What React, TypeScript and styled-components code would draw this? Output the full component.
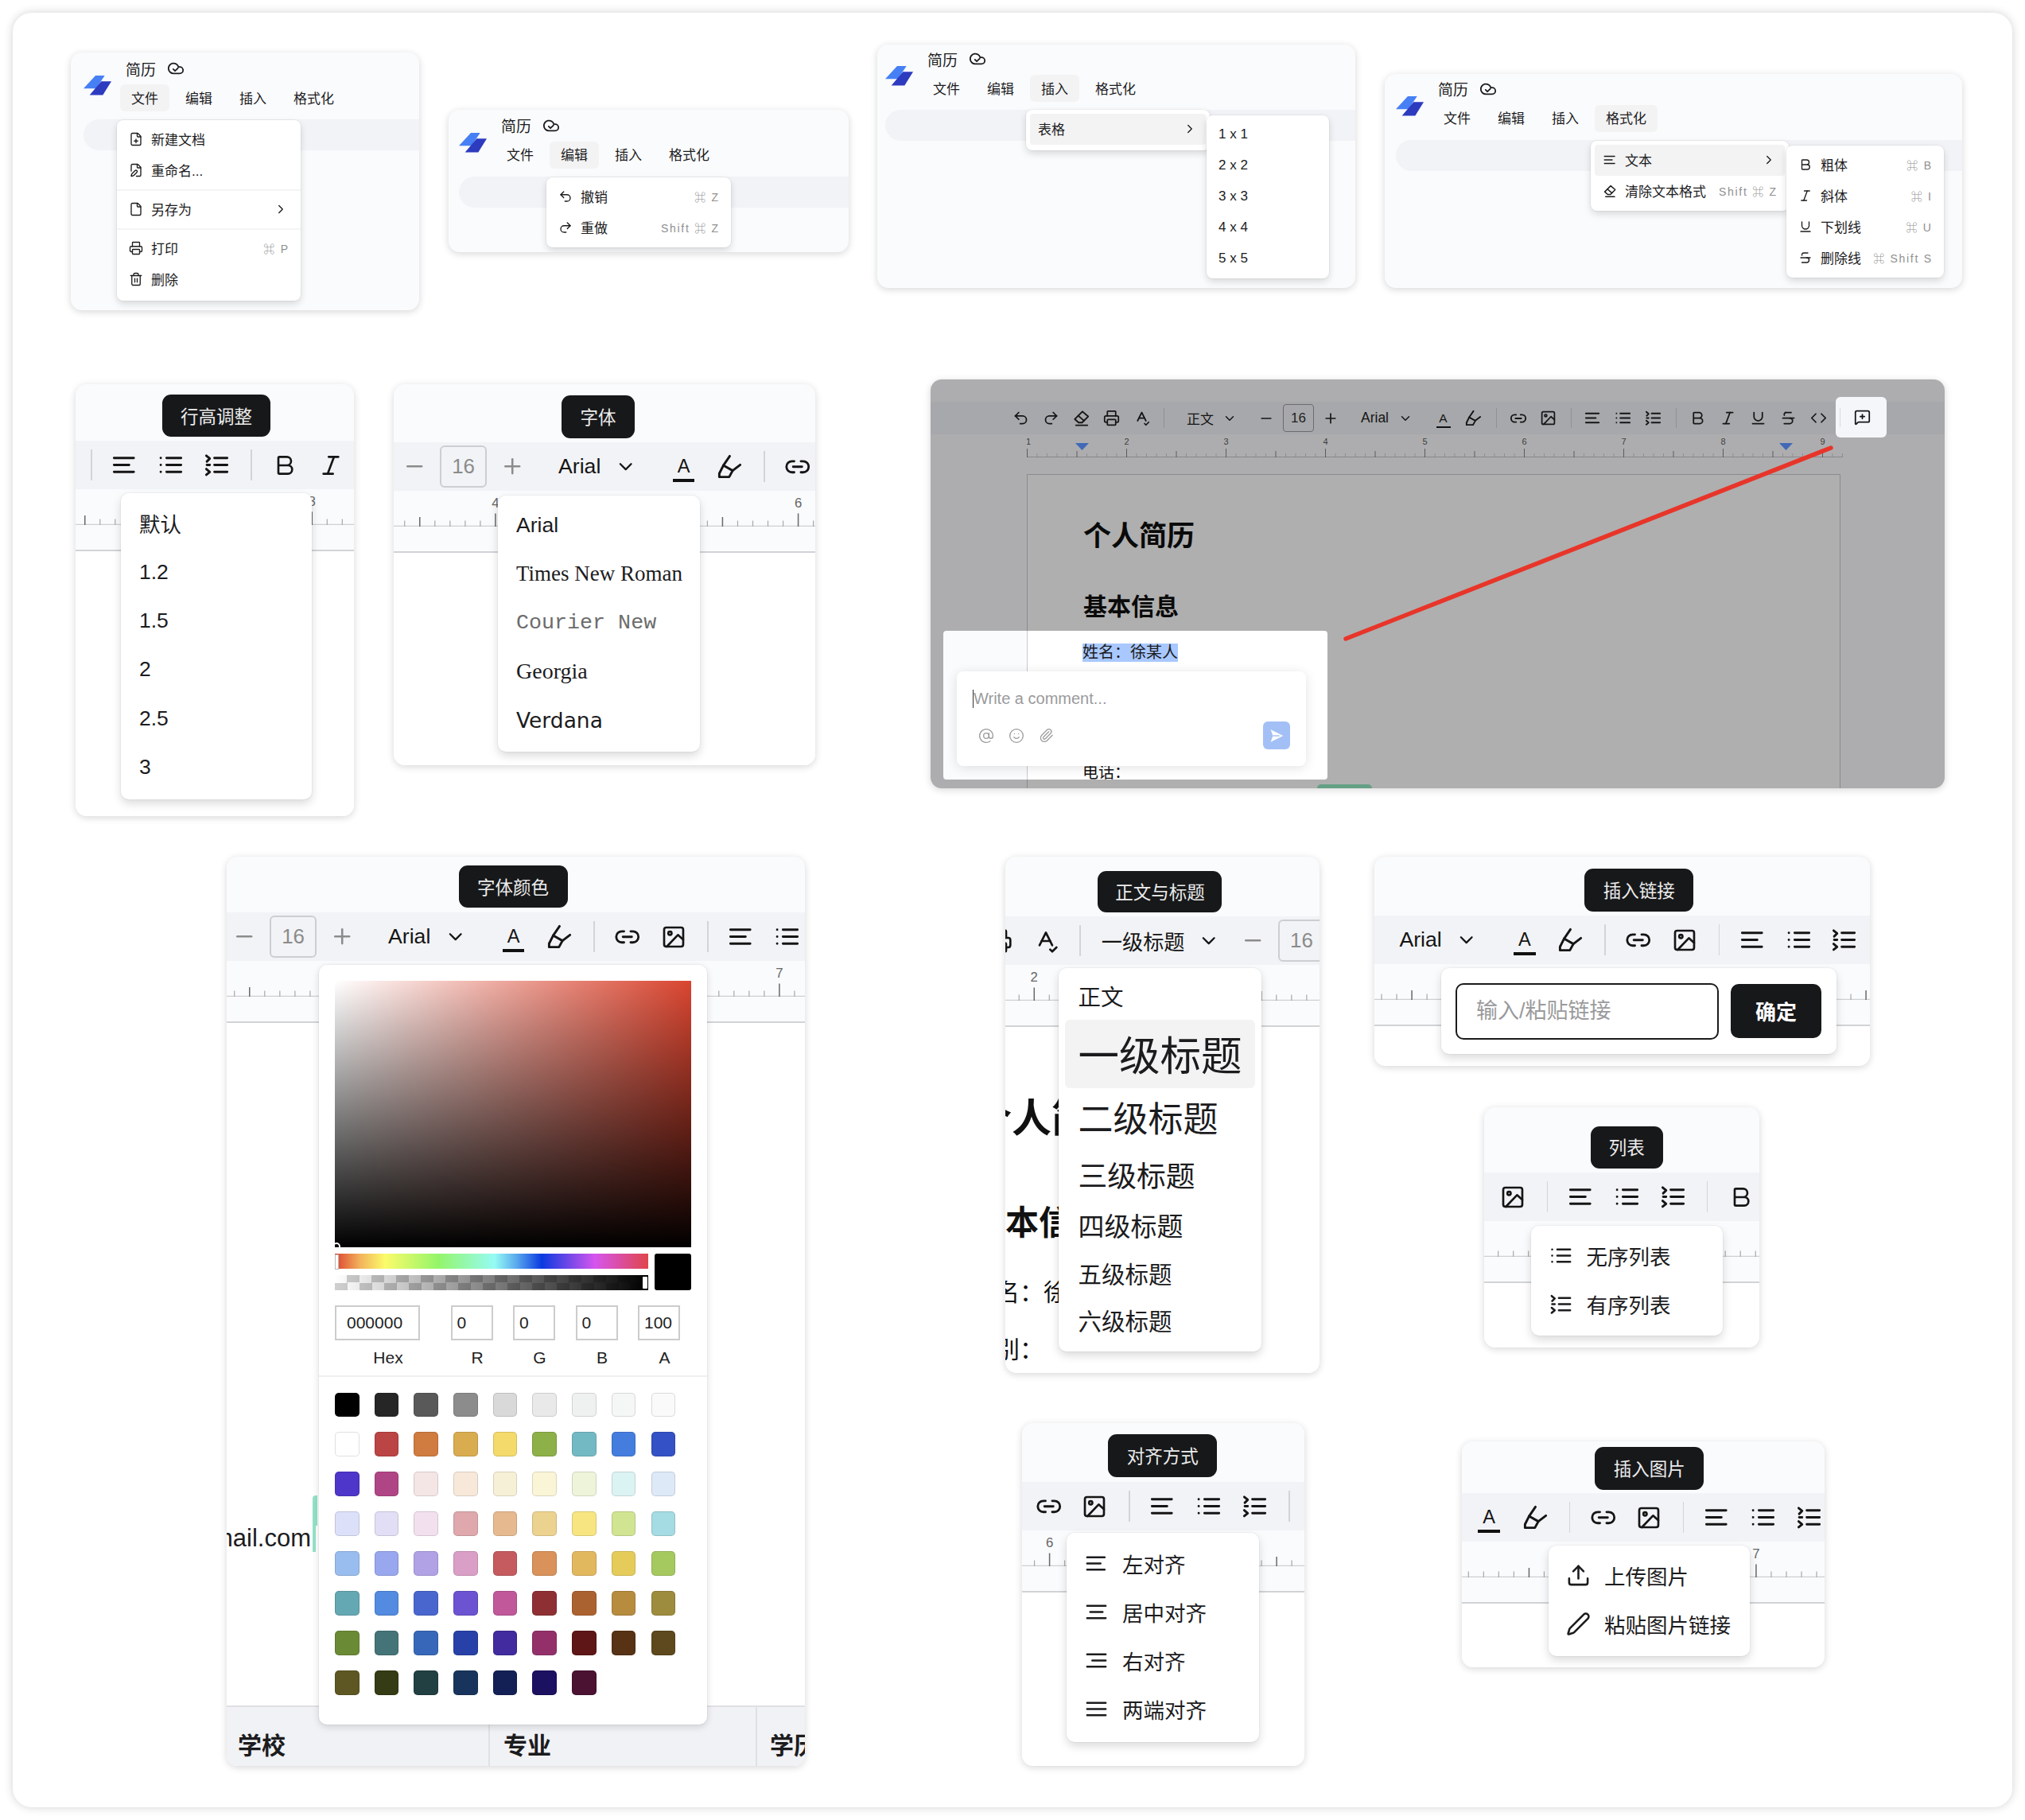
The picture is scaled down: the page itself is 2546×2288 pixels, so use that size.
import React from 'react';
import styled, { createGlobalStyle } from 'styled-components';
import {
    AtSign, Bold, ChevronDown, ChevronRight, Code, File, FilePen, FilePlus, Italic, Link2,
    MessageSquarePlus, Minus, Paperclip, Pen, Plus, Printer, Redo2, Smile, SpellCheck,
    Strikethrough, Trash2, Underline, Undo2, Upload,
} from 'lucide-react';

const SANS = `"Liberation Sans", "Noto Sans CJK SC", sans-serif`;
const K = 1.523;
const COLON = '\uFF1A';

const GlobalStyle = createGlobalStyle`
    html, body {
        margin: 0;
        background: #fff;
        font-family: ${SANS};
        color: #1c1c1e;
    }
`;

const Page = styled.div`
    width: 2546px;
    height: 2288px;
    padding: 16px;
    box-sizing: border-box;
`;

const Sheet = styled.div`
    position: relative;
    width: 2514px;
    height: 2256px;
    background: #fff;
    border-radius: 24px;
    box-shadow: 0 0 12px rgba(0, 0, 0, .18);
`;

const Card = styled.section<{ $x: number; $y: number; $w: number; $h: number }>`
    position: absolute;
    left: ${p => p.$x - 16}px;
    top: ${p => p.$y - 16}px;
    width: ${p => p.$w}px;
    height: ${p => p.$h}px;
    display: flex;
    flex-direction: column;
    overflow: hidden;
    background: #fafbfd;
    border-radius: 14px;
    box-shadow: 0 2px 10px rgba(0, 0, 0, .16);
`;

const Tip = styled.div<{ $l: number; $t: number; $w: number; $h: number }>`
    position: absolute;
    z-index: 3;
    left: ${p => p.$l}px;
    top: ${p => p.$t - 1}px;
    width: ${p => p.$w}px;
    height: ${p => p.$h}px;
    box-sizing: border-box;
    padding-bottom: 2px;
    display: flex;
    align-items: center;
    justify-content: center;
    background: #17181a;
    border-radius: 11px;
    color: #ececec;
    font-size: 22.5px;
`;

const Head = styled.div<{ $h: number }>`
    flex: none;
    height: ${p => p.$h}px;
`;

/* ---- icons that no package has in this shape ---- */

const Glyph = ({ size = 23, children }: { size?: number; children: React.ReactNode }) => (
    <svg viewBox="0 0 24 24" width={size} height={size} fill="none" stroke="currentColor"
         strokeWidth={2} strokeLinecap="round" strokeLinejoin="round">{children}</svg>
);

type IconProps = { size?: number };

const EraserIcon = ({ size }: IconProps) => (
    <Glyph size={size}><path d="M13.5 3.5 21 10l-8 8H8.5L3.5 13.5z" /><path d="m8 9 7.5 6.5" /><path d="M5 21.5h15" /></Glyph>
);
const MarkerIcon = ({ size }: IconProps) => (
    <Glyph size={size}><path d="M12 3 6.5 11" /><path d="m6.5 11 8 4.5-3 5.5H3v-3z" /><path d="m14.5 15.5 6.5-5" /></Glyph>
);
const PictureIcon = ({ size }: IconProps) => (
    <Glyph size={size}><rect x="3" y="3" width="18" height="18" rx="2" /><circle cx="8.5" cy="8.5" r="1.6" /><path d="M21 14.5 16 10 5.5 21" /></Glyph>
);
const AlignLeftIcon = ({ size }: IconProps) => (
    <Glyph size={size}><path d="M3 6h17M3 12h13M3 18h17" /></Glyph>
);
const AlignCenterIcon = ({ size }: IconProps) => (
    <Glyph size={size}><path d="M3 6h18M6 12h12M3 18h18" /></Glyph>
);
const AlignRightIcon = ({ size }: IconProps) => (
    <Glyph size={size}><path d="M3 6h18M8 12h13M3 18h18" /></Glyph>
);
const AlignFullIcon = ({ size }: IconProps) => (
    <Glyph size={size}><path d="M3 6h18M3 12h18M3 18h18" /></Glyph>
);
const BulletsIcon = ({ size }: IconProps) => (
    <Glyph size={size}><path d="M8.5 6H21M8.5 12H21M8.5 18H21M3.5 6h.01M3.5 12h.01M3.5 18h.01" /></Glyph>
);
const NumbersIcon = ({ size }: IconProps) => (
    <Glyph size={size}><path d="M10 6h11M10 12h11M10 18h11" /><path d="m3 4 3 2.5L3.5 9M3.5 12H6M3 15.5l3 2.5-3 2.5" /></Glyph>
);
const CloudCheckIcon = ({ size }: IconProps) => (
    <Glyph size={size}><path d="M17.5 19H9a7 7 0 1 1 6.7-9h1.8a4.5 4.5 0 1 1 0 9Z" /><path d="m8.5 13 2.5 2.5 4-4" /></Glyph>
);

const Logo = () => (
    <svg viewBox="0 0 35 25" width={35} height={25}>
        <path d="M15 0h11.7L15.7 16.3H0z" fill="#4680f4" />
        <path d="M22.3 7.3H35L24.3 24.6H7.7z" fill="#2d3bbf" />
    </svg>
);

/* ---- document menu cards ---- */

const MenuHeader = styled.div<{ $pad: number; $top: number }>`
    flex: none;
    display: flex;
    align-items: center;
    gap: 18px;
    padding: ${p => p.$top}px 0 0 ${p => p.$pad}px;
`;

const TitleStack = styled.div`
    display: flex;
    flex-direction: column;
    gap: 7px;
`;

const TitleRow = styled.div`
    display: flex;
    align-items: center;
    gap: 14px;
    height: 24px;
    box-sizing: border-box;
    padding-bottom: 2px;
    font-size: 19px;
`;

const Tabs = styled.div`
    display: flex;
    gap: 6px;
    margin-left: -7px;
`;

const Tab = styled.div<{ $on?: boolean }>`
    height: 34px;
    box-sizing: border-box;
    padding: 0 14px 2px;
    display: flex;
    align-items: center;
    font-size: 17px;
    border-radius: 6px;
    background: ${p => (p.$on ? '#f3f3f4' : 'transparent')};
`;

const Strip = styled.div<{ $pad: number; $gap: number }>`
    flex: none;
    height: 39px;
    margin: ${p => p.$gap}px 0 0 ${p => p.$pad}px;
    background: #f2f3f6;
    border-radius: 20px 0 0 20px;
`;

const TAB_NAMES = ['文件', '编辑', '插入', '格式化'];

const DocHeader = ({ pad, top, active, gap }: { pad: number; top: number; active: number; gap: number }) => (
    <>
        <MenuHeader $pad={pad} $top={top}>
            <Logo />
            <TitleStack>
                <TitleRow>简历 <CloudCheckIcon size={22} /></TitleRow>
                <Tabs>
                    {TAB_NAMES.map((name, i) => <Tab key={name} $on={i === active}>{name}</Tab>)}
                </Tabs>
            </TitleStack>
        </MenuHeader>
        <Strip $pad={pad} $gap={gap} />
    </>
);

const Menu = styled.div<{ $l: number; $t: number; $w: number; $h: number; $z?: number }>`
    position: absolute;
    z-index: ${p => p.$z ?? 2};
    left: ${p => p.$l}px;
    top: ${p => p.$t}px;
    width: ${p => p.$w}px;
    height: ${p => p.$h}px;
    box-sizing: border-box;
    padding: 4.5px 0;
    background: #fff;
    border-radius: 8px;
    box-shadow: 0 0 0 1px rgba(0, 0, 0, .035), 0 4px 10px rgba(0, 0, 0, .14);
`;

const MenuRow = styled.div<{ $on?: boolean }>`
    height: 39px;
    margin: 0 5px;
    padding: 0 11px 0 10px;
    display: flex;
    align-items: center;
    gap: 10px;
    font-size: 17px;
    border-radius: 4px;
    background: ${p => (p.$on ? '#f3f3f4' : 'transparent')};
    & > svg { flex: none; }
`;

const RowLabel = styled.span`
    flex: 1;
    margin-bottom: 2px;
    white-space: nowrap;
`;

const SizeLabel = styled.span`
    flex: 1;
    white-space: nowrap;
`;

const Shortcut = styled.span`
    font-size: 14px;
    letter-spacing: 1.7px;
    margin-right: -1.7px;
    color: #8f8f8f;
    white-space: nowrap;
`;

const MenuLine = styled.div`
    height: 2px;
    margin: 4px 0;
    background: #f4f4f5;
`;

/* ---- shared editor toolbar, shown at different crops ---- */

const ToolbarStrip = styled.div<{ $dim?: boolean }>`
    flex: none;
    height: ${p => (p.$dim ? 41 : 61)}px;
    display: flex;
    align-items: center;
    overflow: hidden;
    background: ${p => (p.$dim ? '#a7a8ab' : '#f2f3f6')};
`;

const ToolbarTrack = styled.div<{ $x: number; $dim?: boolean }>`
    flex: none;
    display: flex;
    align-items: center;
    height: 40px;
    zoom: ${p => (p.$dim ? 1 : K)};
    margin-left: ${p => (p.$dim ? p.$x : p.$x / K)}px;
    color: #151515;
`;

const ToolBtn = styled.div`
    flex: none;
    width: 38px;
    display: flex;
    align-items: center;
    justify-content: center;
`;

const StepBtn = styled(ToolBtn)<{ $dim?: boolean }>`
    color: ${p => (p.$dim ? '#151515' : '#8b8b8b')};
`;

const ToolLine = styled.div<{ $dim?: boolean }>`
    flex: none;
    width: 1px;
    height: 25px;
    margin: 0 8px 0 9px;
    background: ${p => (p.$dim ? '#909194' : '#d3d4d7')};
`;

const HeadingPick = styled.div<{ $wide?: boolean }>`
    flex: none;
    display: flex;
    align-items: center;
    gap: 11px;
    margin: 0 ${p => (p.$wide ? 8 : 18)}px 0 ${p => (p.$wide ? 9 : 20)}px;
    font-size: ${p => (p.$wide ? 17.2 : 17)}px;
    white-space: nowrap;
`;

const SizeBox = styled.div<{ $dim?: boolean }>`
    flex: none;
    width: 39px;
    height: 35px;
    margin: 0 2px;
    box-sizing: border-box;
    display: flex;
    align-items: center;
    justify-content: center;
    border: 1.5px solid ${p => (p.$dim ? '#6c6c6e' : '#cdced1')};
    border-radius: 4px;
    font-size: 17px;
    color: ${p => (p.$dim ? '#222' : '#8b8b8b')};
`;

const FontPick = styled.div`
    flex: none;
    display: flex;
    align-items: center;
    gap: 11.5px;
    margin: 0 20px 0 19px;
    font-size: 17.5px;
`;

const ColorBtn = styled.div`
    flex: none;
    width: 38px;
    padding-top: 5px;
    display: flex;
    flex-direction: column;
    align-items: center;
    font-size: 15.5px;
    line-height: 15px;
    &::after {
        content: '';
        width: 18px;
        height: 2.5px;
        margin-top: 3px;
        background: #111;
    }
`;

const EditorToolbar = ({ x, dim, wide }: { x: number; dim?: boolean; wide?: boolean }) => (
    <ToolbarStrip $dim={dim}>
        <ToolbarTrack $x={x} $dim={dim}>
            <ToolBtn><Undo2 size={21} /></ToolBtn>
            <ToolBtn><Redo2 size={21} /></ToolBtn>
            <ToolBtn><EraserIcon /></ToolBtn>
            <ToolBtn><Printer size={21} /></ToolBtn>
            <ToolBtn><SpellCheck size={21} /></ToolBtn>
            <ToolLine $dim={dim} />
            <HeadingPick $wide={wide}>{wide ? '一级标题' : '正文'}<ChevronDown size={18} /></HeadingPick>
            <StepBtn $dim={dim}><Minus size={20} /></StepBtn>
            <SizeBox $dim={dim}>16</SizeBox>
            <StepBtn $dim={dim}><Plus size={20} /></StepBtn>
            <FontPick>Arial<ChevronDown size={18} /></FontPick>
            <ColorBtn>A</ColorBtn>
            <ToolBtn><MarkerIcon /></ToolBtn>
            <ToolLine $dim={dim} />
            <ToolBtn><Link2 size={22} /></ToolBtn>
            <ToolBtn><PictureIcon size={21} /></ToolBtn>
            <ToolLine $dim={dim} />
            <ToolBtn><AlignLeftIcon /></ToolBtn>
            <ToolBtn><BulletsIcon /></ToolBtn>
            <ToolBtn><NumbersIcon /></ToolBtn>
            <ToolLine $dim={dim} />
            <ToolBtn><Bold size={21} /></ToolBtn>
            <ToolBtn><Italic size={21} /></ToolBtn>
            <ToolBtn><Underline size={21} /></ToolBtn>
            <ToolBtn><Strikethrough size={21} /></ToolBtn>
            <ToolBtn><Code size={21} /></ToolBtn>
            <ToolLine $dim={dim} />
            <ToolBtn><MessageSquarePlus size={21} /></ToolBtn>
        </ToolbarTrack>
    </ToolbarStrip>
);

/* ---- ruler ---- */

const RulerBar = styled.div<{ $dim?: boolean }>`
    flex: none;
    height: ${p => (p.$dim ? 29 : 45)}px;
    display: flex;
    align-items: flex-end;
    overflow: hidden;
    background: ${p => (p.$dim ? '#adadaf' : '#fafbfd')};
`;

const RulerTrack = styled.div<{ $x: number; $dim?: boolean }>`
    flex: none;
    width: 1026px;
    height: 29px;
    zoom: ${p => (p.$dim ? 1 : K)};
    margin-left: ${p => (p.$dim ? p.$x : p.$x / K)}px;
    & svg { display: block; }
`;

const RulerFoot = styled.div<{ $dim?: boolean }>`
    flex: none;
    box-sizing: border-box;
    height: ${p => (p.$dim ? 21 : 33)}px;
    background: ${p => (p.$dim ? '#adadaf' : '#fafbfd')};
    border-bottom: ${p => (p.$dim ? 'none' : '2px solid #d2d3d6')};
`;

const RULER_TICKS = Array.from({ length: 83 }, (_, i) => i);

const Ruler = ({ x, dim }: { x: number; dim?: boolean }) => {
    const line = dim ? '#88888a' : '#cfd0d3';
    const tick = dim ? '#5c5c5e' : '#6a6a6a';
    const minor = dim ? '#88888a' : '#a9a9ab';
    return (
        <RulerBar $dim={dim}>
            <RulerTrack $x={x} $dim={dim}>
                <svg width={1026} height={29} viewBox="0 0 1026 29">
                    <line x1={0} y1={28.5} x2={1026} y2={28.5} stroke={line} strokeWidth={1} />
                    {RULER_TICKS.map(i => {
                        const h = i % 10 === 0 ? 11 : i % 5 === 0 ? 8 : 5;
                        const px = i * 12.5 + 0.5;
                        return <line key={i} x1={px} x2={px} y1={29 - h} y2={29} stroke={h === 5 ? minor : tick} strokeWidth={h === 5 ? .8 : 1} />;
                    })}
                    {Array.from({ length: 9 }, (_, i) => (
                        <text key={i} x={i * 125 + (i === 0 ? 2 : 0.5)} y={13} textAnchor="middle"
                              fontSize={11} fontFamily="Liberation Sans" fill={dim ? '#3d3d3d' : '#666'}>{i + 1}</text>
                    ))}
                    <path d="M61 11h17l-8.5 9z" fill="#4169b8" />
                    <path d="M946 11h17l-8.5 9z" fill="#4169b8" />
                </svg>
            </RulerTrack>
        </RulerBar>
    );
};

const DocArea = styled.div`
    flex: 1;
    min-height: 0;
    background: #fff;
`;

/* ---- big dropdowns ---- */

const BigMenu = styled.div<{ $l: number; $t: number; $w: number; $h: number; $pad?: number }>`
    position: absolute;
    z-index: 2;
    left: ${p => p.$l}px;
    top: ${p => p.$t}px;
    width: ${p => p.$w}px;
    height: ${p => p.$h}px;
    box-sizing: border-box;
    padding: ${p => p.$pad ?? 7}px 0;
    background: #fff;
    border-radius: 10px;
    box-shadow: 0 0 0 1px rgba(0, 0, 0, .03), 0 5px 12px rgba(0, 0, 0, .15);
`;

const OptionRow = styled.div<{ $family?: string; $size?: number; $color?: string }>`
    height: 61.4px;
    padding-left: 23px;
    display: flex;
    align-items: center;
    font-family: ${p => p.$family ?? SANS};
    font-size: ${p => p.$size ?? 26.5}px;
    color: ${p => p.$color ?? '#1c1c1e'};
    white-space: nowrap;
`;

const IconRow = styled.div`
    height: 61px;
    box-sizing: border-box;
    padding: 0 0 2px 22px;
    display: flex;
    align-items: center;
    gap: 17px;
    font-size: 26.5px;
    white-space: nowrap;
    & > svg { flex: none; }
`;

const HeadingRow = styled.div<{ $size: number; $h: number; $on?: boolean }>`
    height: ${p => p.$h}px;
    box-sizing: border-box;
    margin: 0 8px;
    padding: 0 0 ${p => p.$size * .05}px 16px;
    display: flex;
    align-items: center;
    font-size: ${p => p.$size}px;
    white-space: nowrap;
    border-radius: 6px;
    background: ${p => (p.$on ? '#f3f3f4' : 'transparent')};
`;

/* ---- colour picker ---- */

const Popover = styled.div`
    position: absolute;
    z-index: 2;
    left: 116px;
    top: 136px;
    width: 488px;
    height: 955px;
    box-sizing: border-box;
    padding: 20px 20px 0;
    background: #fff;
    border-radius: 10px;
    box-shadow: 0 0 0 1px rgba(0, 0, 0, .03), 0 3px 10px rgba(0, 0, 0, .14);
`;

const ShadeBox = styled.div`
    position: relative;
    width: 448px;
    height: 335px;
    background:
        linear-gradient(to top, #000, rgba(0, 0, 0, 0)),
        linear-gradient(to right, #fff, #d94530);
    overflow: hidden;
    &::after {
        content: '';
        position: absolute;
        left: -3px;
        bottom: -4px;
        width: 6px;
        height: 6px;
        border: 2px solid #fff;
        border-radius: 50%;
    }
`;

const BarsRow = styled.div`
    display: flex;
    gap: 8px;
    margin-top: 8px;
`;

const BarsStack = styled.div`
    width: 394px;
    display: flex;
    flex-direction: column;
    gap: 8px;
`;

const HueBar = styled.div`
    position: relative;
    height: 19px;
    background: linear-gradient(to right, #dc4230 0%, #f2b25b 8%, #fbfb6a 16%, #94f56a 33%, #95fbf4 51%, #5aa8ee 58%, #0a3ae0 66%, #d655ee 83%, #e0454a 100%);
    &::after {
        content: '';
        position: absolute;
        left: 0;
        top: 1px;
        width: 3px;
        height: 17px;
        background: #fff;
        border: 1px solid #bbb;
    }
`;

const AlphaBar = styled.div`
    position: relative;
    height: 19px;
    background:
        linear-gradient(to right, rgba(0, 0, 0, 0), #000),
        conic-gradient(#d0d0d0 25%, #fff 0 50%, #d0d0d0 0 75%, #fff 0) 0 0 / 31px 19px;
    &::after {
        content: '';
        position: absolute;
        right: 1px;
        top: 2px;
        width: 6px;
        height: 15px;
        background: #fff;
        border-radius: 1px;
    }
`;

const Preview = styled.div`
    width: 46px;
    height: 46px;
    background: #000;
    border-radius: 3px;
`;

const ChannelGrid = styled.div`
    display: grid;
    grid-template-columns: 120px repeat(4, 53px);
    column-gap: 25.5px;
    margin-top: 19px;
`;

const ChannelInput = styled.input<{ $hex?: boolean }>`
    width: ${p => (p.$hex ? 107 : 53)}px;
    height: 44px;
    box-sizing: border-box;
    padding: 0 0 0 ${p => (p.$hex ? 13 : 6)}px;
    border: 2px solid #cccccc;
    outline: none;
    font: 21px ${SANS};
    color: #222;
`;

const ChannelLabel = styled.div`
    padding: 10px 0 0 14px;
    text-align: center;
    font-size: 21px;
    line-height: 24px;
    color: #222;
`;

const PickerLine = styled.div`
    height: 2px;
    margin: 10px -20px 0;
    background: #f0f0f1;
`;

const SwatchGrid = styled.div`
    display: grid;
    grid-template-columns: repeat(9, 30.5px);
    column-gap: 19.2px;
    row-gap: 19.3px;
    margin-top: 19.5px;
`;

const Swatch = styled.div<{ $c: string }>`
    height: 30.7px;
    box-sizing: border-box;
    background: ${p => p.$c};
    border: 1.5px solid rgba(0, 0, 0, .12);
    border-radius: 5px;
`;

const SWATCHES = [
    '#000000', '#262626', '#595959', '#8c8c8c', '#d9d9d9', '#e9e9e9', '#eff1f0', '#f5f7f6', '#fafafa',
    '#ffffff', '#bb4444', '#d07b3f', '#d9ac50', '#f3da6a', '#8db048', '#73b9c3', '#447ddd', '#3451c5',
    '#4f36ca', '#b04585', '#f5e6e6', '#f7e8da', '#f6f0d6', '#f9f5d6', '#eef4da', '#dcf3f3', '#dee9f7',
    '#dce0f9', '#e2def5', '#f3e0ee', '#dea8ad', '#e6b98f', '#ecd28f', '#f6e581', '#d0e492', '#a5dbe2',
    '#99bdee', '#99a7ee', '#b1a2e6', '#da9fc6', '#c55a5f', '#d9925a', '#e2b85f', '#e5cc5a', '#a5c95f',
    '#64a8b3', '#528bdf', '#4966cf', '#6c53d1', '#c0589a', '#8e3033', '#ab6231', '#b78c3e', '#9e8c3e',
    '#6b8a35', '#447478', '#3767b8', '#2741a8', '#412b9e', '#93306a', '#5e1616', '#573215', '#5e481d',
    '#5e5723', '#353b14', '#223f42', '#18345c', '#132055', '#1c1060', '#4b1232',
];

const EmailDoc = styled(DocArea)`
    display: flex;
    flex-direction: column;
    justify-content: flex-end;
`;

const EmailLine = styled.div`
    position: relative;
    width: 106px;
    height: 34px;
    margin-bottom: 193px;
    display: flex;
    justify-content: flex-end;
    font-size: 31px;
    line-height: 34px;
    white-space: nowrap;
    &::after {
        content: '';
        position: absolute;
        left: 108px;
        top: -37px;
        width: 6px;
        height: 38px;
        background: #94e2c8;
        border-radius: 4px 0 0 0;
    }
    &::before {
        content: '';
        position: absolute;
        left: 108px;
        top: 0;
        width: 4px;
        height: 34px;
        background: #94e2c8;
    }
`;

const SchoolTable = styled.div`
    flex: none;
    height: 76px;
    box-sizing: border-box;
    display: grid;
    grid-template-columns: 331px 336px 1fr;
    background: #f1f2f5;
    border-top: 2px solid #e0e1e3;
`;

const SchoolCell = styled.div<{ $pad: number }>`
    padding: 27px 0 0 ${p => p.$pad}px;
    border-right: 2px solid #e0e1e3;
    font-size: 30px;
    line-height: 44px;
    font-weight: 700;
    white-space: nowrap;
    overflow: hidden;
    &:last-child { border-right: none; }
`;

/* ---- heading crop ---- */

const ResumeCrop = styled(DocArea)`
    margin-left: -42px;
    color: #111;
`;

const CropTitle = styled.div`
    padding-top: 85px;
    font-size: 50px;
    line-height: 60px;
    font-weight: 700;
    white-space: nowrap;
`;

const CropSubtitle = styled.div`
    margin-top: 77px;
    font-size: 42px;
    line-height: 50px;
    font-weight: 700;
    white-space: nowrap;
`;

const CropText = styled.div<{ $gap: number }>`
    margin-top: ${p => p.$gap}px;
    font-size: 30px;
    line-height: 40px;
    white-space: nowrap;
`;

/* ---- link popup ---- */

const LinkPopup = styled(BigMenu)`
    display: flex;
    align-items: center;
    gap: 15px;
    padding: 0 18px;
`;

const LinkInput = styled.input`
    width: 331px;
    height: 71px;
    box-sizing: border-box;
    padding: 0 24px;
    border: 2px solid #1b1b1d;
    border-radius: 10px;
    outline: none;
    font: 27px ${SANS};
    &::placeholder { color: #9a9a9c; opacity: 1; }
`;

const ConfirmBtn = styled.div`
    width: 114px;
    height: 68px;
    box-sizing: border-box;
    padding-bottom: 2px;
    display: flex;
    align-items: center;
    justify-content: center;
    background: #17181a;
    border-radius: 10px;
    color: #fff;
    font-size: 26px;
    font-weight: 700;
`;

/* ---- dimmed comment walkthrough ---- */

const DimCard = styled(Card)`
    background: #adadaf;
`;

const PageSheet = styled.div`
    flex: 1;
    width: 1023px;
    margin-left: 121px;
    padding-left: 70px;
    box-sizing: border-box;
    background: #afafaf;
    border: 1px solid #8b8b8d;
    border-bottom: none;
    color: #0a0a0a;
`;

const PageTitle = styled.div`
    margin-top: 55px;
    font-size: 35px;
    line-height: 44px;
    font-weight: 700;
`;

const PageSubtitle = styled.div`
    margin-top: 47px;
    font-size: 30px;
    line-height: 40px;
    font-weight: 700;
`;

const CommentSpot = styled.div`
    position: absolute;
    z-index: 2;
    left: 1138px;
    top: 22px;
    width: 64px;
    height: 51px;
    display: flex;
    align-items: center;
    background: #f5f6fa;
    border-radius: 6px;
    color: #151515;
    & > svg { margin-left: 17px; }
`;

const SpotLine = styled.div`
    width: 1px;
    height: 24px;
    margin-left: 5px;
    background: #d8d9dc;
`;

const Arrow = styled.svg`
    position: absolute;
    z-index: 1;
    left: 0;
    top: 0;
`;

const SelectSpot = styled.div`
    position: absolute;
    z-index: 2;
    left: 16px;
    top: 316px;
    width: 483px;
    height: 187px;
    box-sizing: border-box;
    padding: 16px 0 0 17px;
    overflow: hidden;
    background: linear-gradient(to right, #fafbfd 105px, #c9c9cb 105px, #c9c9cb 106px, #fff 106px);
    border-radius: 4px;
`;

const SelectedText = styled.div`
    width: fit-content;
    margin-left: 158px;
    font-size: 20px;
    line-height: 23px;
    background: #a9c8ff;
    white-space: nowrap;
`;

const CommentBox = styled.div`
    position: relative;
    z-index: 1;
    width: 439px;
    height: 119px;
    margin-top: 12px;
    box-sizing: border-box;
    padding-top: 22px;
    background: #fff;
    border-radius: 8px;
    box-shadow: 0 2px 14px rgba(0, 0, 0, .12);
`;

const CommentHint = styled.div`
    display: flex;
    align-items: center;
    height: 24px;
    padding-left: 20px;
    font-size: 20px;
    color: #9a9a9c;
    &::before {
        content: '';
        width: 1px;
        height: 23px;
        background: #333;
    }
`;

const CommentTools = styled.div`
    display: flex;
    align-items: center;
    gap: 18px;
    margin-top: 17px;
    padding: 0 20px 0 27px;
    color: #9c9c9c;
`;

const SendBtn = styled.div`
    width: 34px;
    height: 35px;
    margin-left: auto;
    display: flex;
    align-items: center;
    justify-content: center;
    background: #a3c0f6;
    border-radius: 6px;
`;

const PhoneLine = styled.div`
    margin: -2px 0 0 158px;
    font-size: 20px;
    line-height: 20px;
    color: #111;
`;

const GreenTab = styled.div`
    position: absolute;
    z-index: 2;
    left: 486px;
    bottom: 0;
    width: 69px;
    height: 5px;
    background: #64a085;
    border-radius: 6px 6px 0 0;
`;

const MenuIcon = { size: 18, strokeWidth: 1.8 };

export default function App() {
    return (
        <>
            <GlobalStyle />
            <Page>
                <Sheet>
                    <Card $x={89} $y={66} $w={438} $h={324}>
                        <DocHeader pad={16} top={9} active={0} gap={10} />
                        <Menu $l={58} $t={85} $w={231} $h={227}>
                            <MenuRow><FilePlus {...MenuIcon} /><RowLabel>新建文档</RowLabel></MenuRow>
                            <MenuRow><FilePen {...MenuIcon} /><RowLabel>重命名...</RowLabel></MenuRow>
                            <MenuLine />
                            <MenuRow><File {...MenuIcon} /><RowLabel>另存为</RowLabel><ChevronRight {...MenuIcon} /></MenuRow>
                            <MenuLine />
                            <MenuRow><Printer {...MenuIcon} /><RowLabel>打印</RowLabel><Shortcut>⌘ P</Shortcut></MenuRow>
                            <MenuRow><Trash2 {...MenuIcon} /><RowLabel>删除</RowLabel></MenuRow>
                        </Menu>
                    </Card>

                    <Card $x={564} $y={138} $w={503} $h={179}>
                        <DocHeader pad={13} top={8.5} active={1} gap={10.5} />
                        <Menu $l={123} $t={85} $w={232} $h={88}>
                            <MenuRow><Undo2 {...MenuIcon} /><RowLabel>撤销</RowLabel><Shortcut>⌘ Z</Shortcut></MenuRow>
                            <MenuRow><Redo2 {...MenuIcon} /><RowLabel>重做</RowLabel><Shortcut>Shift ⌘ Z</Shortcut></MenuRow>
                        </Menu>
                    </Card>

                    <Card $x={1103} $y={56} $w={601} $h={306}>
                        <DocHeader pad={10} top={7} active={2} gap={10} />
                        <Menu $l={187} $t={82} $w={231} $h={51}>
                            <MenuRow $on><RowLabel>表格</RowLabel><ChevronRight {...MenuIcon} /></MenuRow>
                        </Menu>
                        <Menu $l={414} $t={89} $w={154} $h={205} $z={3}>
                            {['1 x 1', '2 x 2', '3 x 3', '4 x 4', '5 x 5'].map(t => (
                                <MenuRow key={t}><SizeLabel>{t}</SizeLabel></MenuRow>
                            ))}
                        </Menu>
                    </Card>

                    <Card $x={1741} $y={93} $w={726} $h={269}>
                        <DocHeader pad={14} top={7.5} active={3} gap={10.5} />
                        <Menu $l={259} $t={84} $w={249} $h={88}>
                            <MenuRow $on><AlignLeftIcon size={18} /><RowLabel>文本</RowLabel><ChevronRight {...MenuIcon} /></MenuRow>
                            <MenuRow><EraserIcon size={18} /><RowLabel>清除文本格式</RowLabel><Shortcut>Shift ⌘ Z</Shortcut></MenuRow>
                        </Menu>
                        <Menu $l={505} $t={90} $w={198} $h={166} $z={3}>
                            <MenuRow><Bold {...MenuIcon} /><RowLabel>粗体</RowLabel><Shortcut>⌘ B</Shortcut></MenuRow>
                            <MenuRow><Italic {...MenuIcon} /><RowLabel>斜体</RowLabel><Shortcut>⌘ I</Shortcut></MenuRow>
                            <MenuRow><Underline {...MenuIcon} /><RowLabel>下划线</RowLabel><Shortcut>⌘ U</Shortcut></MenuRow>
                            <MenuRow><Strikethrough {...MenuIcon} /><RowLabel>删除线</RowLabel><Shortcut>⌘ Shift S</Shortcut></MenuRow>
                        </Menu>
                    </Card>

                    <Card $x={95} $y={483} $w={350} $h={543}>
                        <Tip $l={109} $t={14} $w={136} $h={53}>行高调整</Tip>
                        <Head $h={71} />
                        <EditorToolbar x={-1062.5} />
                        <Ruler x={-1036} />
                        <RulerFoot />
                        <DocArea />
                        <BigMenu $l={57} $t={137} $w={240} $h={385}>
                            {['默认', '1.2', '1.5', '2', '2.5', '3'].map(t => <OptionRow key={t}>{t}</OptionRow>)}
                        </BigMenu>
                    </Card>

                    <Card $x={495} $y={483} $w={530} $h={479}>
                        <Tip $l={211} $t={15} $w={92} $h={54}>字体</Tip>
                        <Head $h={73} />
                        <EditorToolbar x={-473.5} />
                        <Ruler x={-444} />
                        <RulerFoot />
                        <DocArea />
                        <BigMenu $l={131} $t={140} $w={254} $h={322} $pad={6.5}>
                            <OptionRow>Arial</OptionRow>
                            <OptionRow $family="'Liberation Serif', serif" $size={27}>Times New Roman</OptionRow>
                            <OptionRow $family="'Liberation Mono', monospace" $color="#6c6c6c" $size={26.7}>Courier New</OptionRow>
                            <OptionRow $family="'Liberation Serif', serif" $size={28}>Georgia</OptionRow>
                            <OptionRow $family="'DejaVu Sans', sans-serif">Verdana</OptionRow>
                        </BigMenu>
                    </Card>

                    <DimCard $x={1170} $y={477} $w={1275} $h={514}>
                        <Head $h={28} />
                        <EditorToolbar x={94} dim />
                        <Ruler x={121} dim />
                        <RulerFoot $dim />
                        <PageSheet>
                            <PageTitle>个人简历</PageTitle>
                            <PageSubtitle>基本信息</PageSubtitle>
                        </PageSheet>
                        <CommentSpot>
                            <SpotLine />
                            <MessageSquarePlus size={21} />
                        </CommentSpot>
                        <Arrow width={1275} height={514} viewBox="0 0 1275 514">
                            <line x1={1132} y1={86} x2={522} y2={326} stroke="#e8352a" strokeWidth={5.5} strokeLinecap="round" />
                        </Arrow>
                        <SelectSpot>
                            <SelectedText>{`姓名${COLON}徐某人`}</SelectedText>
                            <CommentBox>
                                <CommentHint>Write a comment...</CommentHint>
                                <CommentTools>
                                    <AtSign size={20} strokeWidth={1.6} />
                                    <Smile size={20} strokeWidth={1.6} />
                                    <Paperclip size={19} strokeWidth={1.6} />
                                    <SendBtn>
                                        <svg viewBox="0 0 24 24" width={22} height={22}>
                                            <path d="M4 3.5 21 12 4 20.5 7 12Z" fill="#fff" />
                                            <path d="M7 12h9" stroke="#a3c0f6" strokeWidth={1.5} />
                                        </svg>
                                    </SendBtn>
                                </CommentTools>
                            </CommentBox>
                            <PhoneLine>{`电话${COLON}`}</PhoneLine>
                        </SelectSpot>
                        <GreenTab />
                    </DimCard>

                    <Card $x={285} $y={1077} $w={727} $h={1143}>
                        <Tip $l={291.5} $t={12} $w={137} $h={53}>字体颜色</Tip>
                        <Head $h={70} />
                        <EditorToolbar x={-477.5} />
                        <Ruler x={-448} />
                        <RulerFoot />
                        <EmailDoc>
                            <EmailLine>mail.com</EmailLine>
                            <SchoolTable>
                                <SchoolCell $pad={14}>学校</SchoolCell>
                                <SchoolCell $pad={17}>专业</SchoolCell>
                                <SchoolCell $pad={16}>学历</SchoolCell>
                            </SchoolTable>
                        </EmailDoc>
                        <Popover>
                            <ShadeBox />
                            <BarsRow>
                                <BarsStack>
                                    <HueBar />
                                    <AlphaBar />
                                </BarsStack>
                                <Preview />
                            </BarsRow>
                            <ChannelGrid>
                                <ChannelInput $hex readOnly value="000000" />
                                <ChannelInput readOnly value="0" />
                                <ChannelInput readOnly value="0" />
                                <ChannelInput readOnly value="0" />
                                <ChannelInput readOnly value="100" />
                                {['Hex', 'R', 'G', 'B', 'A'].map(t => <ChannelLabel key={t}>{t}</ChannelLabel>)}
                            </ChannelGrid>
                            <PickerLine />
                            <SwatchGrid>
                                {SWATCHES.map((c, i) => <Swatch key={i} $c={c} />)}
                            </SwatchGrid>
                        </Popover>
                    </Card>

                    <Card $x={1264} $y={1077} $w={395} $h={649}>
                        <Tip $l={116.4} $t={19} $w={156} $h={52}>正文与标题</Tip>
                        <Head $h={75} />
                        <EditorToolbar x={-209.6} wide />
                        <Ruler x={-154.6} />
                        <RulerFoot />
                        <ResumeCrop>
                            <CropTitle>个人简历</CropTitle>
                            <CropSubtitle>基本信息</CropSubtitle>
                            <CropText $gap={42}>{`姓名${COLON}徐某人`}</CropText>
                            <CropText $gap={32}>{`性别${COLON}`}</CropText>
                        </ResumeCrop>
                        <BigMenu $l={67.4} $t={140} $w={255} $h={482} $pad={5.5}>
                            <HeadingRow $size={28.5} $h={59}>正文</HeadingRow>
                            <HeadingRow $size={51.5} $h={86} $on>一级标题</HeadingRow>
                            <HeadingRow $size={44} $h={76}>二级标题</HeadingRow>
                            <HeadingRow $size={36.8} $h={66}>三级标题</HeadingRow>
                            <HeadingRow $size={33} $h={62}>四级标题</HeadingRow>
                            <HeadingRow $size={29.5} $h={59}>五级标题</HeadingRow>
                            <HeadingRow $size={29.5} $h={59}>六级标题</HeadingRow>
                        </BigMenu>
                    </Card>

                    <Card $x={1728} $y={1077} $w={623} $h={263}>
                        <Tip $l={264.3} $t={16} $w={137} $h={54}>插入链接</Tip>
                        <Head $h={74} />
                        <EditorToolbar x={-649.2} />
                        <Ruler x={-619.8} />
                        <RulerFoot />
                        <DocArea />
                        <LinkPopup $l={84.1} $t={140} $w={497.3} $h={108}>
                            <LinkInput placeholder="输入/粘贴链接" readOnly />
                            <ConfirmBtn>确定</ConfirmBtn>
                        </LinkPopup>
                    </Card>

                    <Card $x={1866} $y={1392} $w={346} $h={302}>
                        <Tip $l={133.5} $t={24.5} $w={91.5} $h={53}>列表</Tip>
                        <Head $h={82} />
                        <EditorToolbar x={-1002.8} />
                        <Ruler x={-972.8} />
                        <RulerFoot />
                        <DocArea />
                        <BigMenu $l={58.5} $t={148.5} $w={241.5} $h={138.5} $pad={8}>
                            <IconRow><BulletsIcon size={31} />无序列表</IconRow>
                            <IconRow><NumbersIcon size={31} />有序列表</IconRow>
                        </BigMenu>
                    </Card>

                    <Card $x={1285} $y={1789} $w={355} $h={431}>
                        <Tip $l={108.2} $t={15} $w={137} $h={54}>对齐方式</Tip>
                        <Head $h={74} />
                        <EditorToolbar x={-947.7} />
                        <Ruler x={-918.2} />
                        <RulerFoot />
                        <DocArea />
                        <BigMenu $l={56} $t={138} $w={242} $h={263} $pad={9}>
                            <IconRow><AlignLeftIcon size={31} />左对齐</IconRow>
                            <IconRow><AlignCenterIcon size={31} />居中对齐</IconRow>
                            <IconRow><AlignRightIcon size={31} />右对齐</IconRow>
                            <IconRow><AlignFullIcon size={31} />两端对齐</IconRow>
                        </BigMenu>
                    </Card>

                    <Card $x={1838} $y={1812} $w={456} $h={284}>
                        <Tip $l={167.3} $t={8} $w={137} $h={54}>插入图片</Tip>
                        <Head $h={65} />
                        <EditorToolbar x={-804} />
                        <Ruler x={-773.4} />
                        <RulerFoot />
                        <DocArea />
                        <BigMenu $l={109} $t={131} $w={253} $h={139} $pad={8}>
                            <IconRow><Upload size={31} strokeWidth={2} />上传图片</IconRow>
                            <IconRow><Pen size={31} strokeWidth={2} />粘贴图片链接</IconRow>
                        </BigMenu>
                    </Card>
                </Sheet>
            </Page>
        </>
    );
}
